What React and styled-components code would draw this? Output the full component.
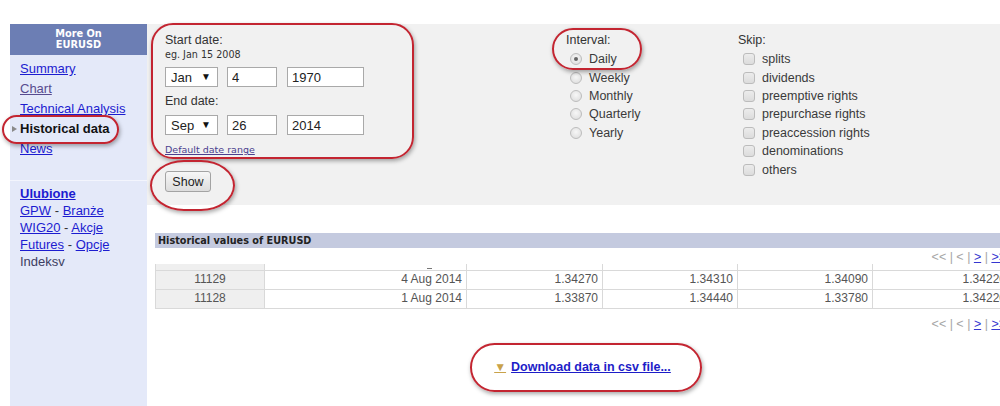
import React from 'react';
import styled, { createGlobalStyle } from 'styled-components';

const Global = createGlobalStyle`
  html, body { margin: 0; padding: 0; background: #fff; }
  body {
    font-family: "Liberation Sans", Arial, sans-serif;
    font-size: 12.5px;
    color: #333;
  }
  * { box-sizing: border-box; }
`;

const Page = styled.div`
  position: relative;
  width: 1000px;
  height: 406px;
  overflow: hidden;
  display: flex;
  align-items: stretch;
  padding: 24px 0 0 10px;
`;

/* ---------- sidebar ---------- */
const Sidebar = styled.aside`
  width: 137px;
  flex-shrink: 0;
  background: #e4e9f9;
  display: flex;
  flex-direction: column;
`;

const SideHeader = styled.div`
  height: 31px;
  padding-top: 4px;
  background: #6c7eb4;
  color: #fff;
  font-family: "DejaVu Sans", Verdana, sans-serif;
  font-weight: bold;
  font-size: 9.8px;
  line-height: 11px;
  text-align: center;
`;

const SideNav = styled.nav`
  display: flex;
  flex-direction: column;
  padding: 4px 0 0 10px;
`;

const NavLink = styled.a`
  display: block;
  line-height: 20px;
  font-size: 13px;
  color: ${(p) => (p.$visited ? '#574b8f' : '#1c1cd0')};
  text-decoration: underline;
  cursor: pointer;
`;

const CurrentItem = styled.div`
  display: flex;
  align-items: center;
  margin-left: -8px;
  line-height: 20px;
  font-size: 13px;
  font-weight: bold;
  color: #111;
`;

const Pointer = styled.span`
  width: 0;
  height: 0;
  border-left: 5px solid #8a8a8a;
  border-top: 3.5px solid transparent;
  border-bottom: 3.5px solid transparent;
  margin-right: 3px;
`;

const Separator = styled.div`
  height: 1px;
  margin-top: 21px;
  background: #f3f5fd;
`;

const Favorites = styled.div`
  padding: 4px 0 0 10px;
  display: flex;
  flex-direction: column;
`;

const FavLine = styled.div`
  line-height: 17px;
  font-size: 13px;
  color: ${(p) => (p.$plain ? '#3d3d62' : '#333')};
`;

const FavLink = styled.a`
  color: #1c1cd0;
  text-decoration: underline;
  font-weight: ${(p) => (p.$bold ? 'bold' : 'normal')};
`;

/* ---------- main ---------- */
const Main = styled.main`
  flex: 1;
  display: flex;
  flex-direction: column;
  min-width: 0;
`;

const FormPanel = styled.section`
  height: 181px;
  background: #f1f1f1;
  display: flex;
  padding: 9px 0 0 18px;
`;

const DateCol = styled.div`
  width: 401px;
  display: flex;
  flex-direction: column;
  align-items: flex-start;
`;

const Label = styled.div`
  line-height: 15px;
  font-size: 12.5px;
  color: #333;
  margin-top: ${(p) => p.$mt || 0}px;
`;

const Hint = styled.div`
  margin-top: 1px;
  font-family: "DejaVu Sans", Verdana, sans-serif;
  font-size: 9.6px;
  line-height: 12px;
  color: #333;
`;

const FieldRow = styled.div`
  display: flex;
  height: 20px;
  margin-top: 6px;
`;

const SelectWrap = styled.div`
  position: relative;
  width: 53px;
  height: 20px;
`;

const Select = styled.select`
  appearance: none;
  width: 53px;
  height: 20px;
  border: 1px solid #a9a9a9;
  background: #fff;
  font-family: "Liberation Sans", Arial, sans-serif;
  font-size: 13px;
  color: #222;
  padding: 0 0 0 5px;
  border-radius: 0;
`;

const Arrow = styled.span`
  position: absolute;
  right: 7px;
  top: 4px;
  font-size: 10px;
  line-height: 11px;
  color: #111;
  pointer-events: none;
`;

const TextInput = styled.input`
  width: ${(p) => p.$w}px;
  height: 20px;
  margin-left: ${(p) => p.$ml}px;
  border: 1px solid #a9a9a9;
  background: #fff;
  font-family: "Liberation Sans", Arial, sans-serif;
  font-size: 13px;
  color: #222;
  padding: 0 4px;
`;

const SmallLink = styled.a`
  margin-top: 9px;
  font-family: "DejaVu Sans", Verdana, sans-serif;
  font-size: 9.5px;
  line-height: 12px;
  color: #4b3e8e;
  text-decoration: underline;
`;

const ShowButton = styled.button`
  margin-top: 15px;
  width: 46px;
  height: 21px;
  padding: 0;
  border: 1px solid #a3a3a3;
  border-radius: 3px;
  background: linear-gradient(#f7f7f7, #dddddd);
  font-family: "Liberation Sans", Arial, sans-serif;
  font-size: 12.5px;
  color: #222;
`;

const OptionCol = styled.div`
  width: ${(p) => (p.$w ? `${p.$w}px` : 'auto')};
  display: flex;
  flex-direction: column;
`;

const OptionList = styled.div`
  margin-top: 2px;
  display: flex;
  flex-direction: column;
`;

const OptionItem = styled.label`
  display: flex;
  align-items: center;
  height: 18.4px;
  padding-left: ${(p) => p.$pl}px;
  gap: 7px;
  font-size: 12.5px;
  color: #3a3a3a;
`;

const Radio = styled.span`
  width: 12px;
  height: 12px;
  border-radius: 50%;
  border: 1px solid #bdbdbd;
  background: radial-gradient(circle at 50% 40%, #f7f7f7, #dadada);
  display: flex;
  align-items: center;
  justify-content: center;
  &::after {
    content: '';
    width: 4px;
    height: 4px;
    border-radius: 50%;
    background: ${(p) => (p.$checked ? '#666' : 'transparent')};
  }
`;

const Checkbox = styled.span`
  width: 12px;
  height: 12px;
  border-radius: 3px;
  border: 1px solid #bcbcbc;
  background: linear-gradient(#ececec, #dcdcdc);
`;

/* ---------- table ---------- */
const TableSection = styled.section`
  margin: 28px 0 0 8px;
  width: 855px;
  display: flex;
  flex-direction: column;
`;

const TableTitle = styled.div`
  height: 15px;
  background: #c4cadf;
  padding-left: 3px;
  font-family: "DejaVu Sans", Verdana, sans-serif;
  font-weight: bold;
  font-size: 9.7px;
  line-height: 15px;
  color: #222;
`;

const Pager = styled.div`
  margin-top: ${(p) => p.$mt}px;
  padding-right: 4px;
  text-align: right;
  line-height: 14px;
  font-size: 12.5px;
  color: #a6a6a6;
  white-space: pre;
`;

const PagerLink = styled.a`
  color: #3636d0;
  text-decoration: underline;
`;

const Table = styled.table`
  width: 855px;
  border-collapse: collapse;
  table-layout: fixed;
`;

const ClipCell = styled.td`
  height: 6px;
  padding: 0 34px 0 0;
  border-left: 1px solid #d9d9d9;
  border-right: 1px solid #d9d9d9;
  background: ${(p) => (p.$first ? '#efefef' : '#fff')};
  line-height: 0;
  text-align: right;
  vertical-align: middle;
`;

const Dash = styled.span`
  display: inline-block;
  width: 5px;
  height: 1px;
  background: #777;
`;

const Cell = styled.td`
  height: 19px;
  padding: 0 4px;
  border: 1px solid #d9d9d9;
  font-size: 12px;
  line-height: 17px;
  color: #555;
  text-align: ${(p) => (p.$first ? 'center' : 'right')};
  background: ${(p) => (p.$first ? '#efefef' : '#fff')};
  white-space: nowrap;
`;

const DownloadRow = styled.div`
  margin-top: 29px;
  text-align: center;
  line-height: 14px;
`;

const DownloadLink = styled.a`
  font-family: "Liberation Sans", Arial, sans-serif;
  font-weight: bold;
  font-size: 12.5px;
  cursor: pointer;
`;

const Tri = styled.span`
  color: #c9a24a;
  font-size: 12px;
  text-decoration: underline;
  margin-right: 5px;
`;

const DownloadText = styled.span`
  color: #1d1dc8;
  text-decoration: underline;
`;

/* ---------- annotations ---------- */
const Mark = styled.div`
  position: absolute;
  left: ${(p) => p.$x}px;
  top: ${(p) => p.$y}px;
  width: ${(p) => p.$w}px;
  height: ${(p) => p.$h}px;
  border: 2px solid #c32531;
  border-radius: ${(p) => p.$r};
  box-shadow: 1px 2px 4px rgba(0, 0, 0, 0.35);
  pointer-events: none;
`;

const intervals = ['Daily', 'Weekly', 'Monthly', 'Quarterly', 'Yearly'];
const skips = [
  'splits',
  'dividends',
  'preemptive rights',
  'prepurchase rights',
  'preaccession rights',
  'denominations',
  'others',
];
const rows = [
  ['11129', '4 Aug 2014', '1.34270', '1.34310', '1.34090', '1.34220'],
  ['11128', '1 Aug 2014', '1.33870', '1.34440', '1.33780', '1.34220'],
];
const colWidths = [109, 202, 136, 135, 135, 138];

function PagerLine({ mt }) {
  return (
    <Pager $mt={mt}>
      {'<< | < | '}
      <PagerLink>&gt;</PagerLink>
      {' | '}
      <PagerLink>&gt;&gt;</PagerLink>
    </Pager>
  );
}

export default function App() {
  return (
    <>
      <Global />
      <Page>
        <Sidebar>
          <SideHeader>
            More On
            <br />
            EURUSD
          </SideHeader>
          <SideNav>
            <NavLink>Summary</NavLink>
            <NavLink $visited>Chart</NavLink>
            <NavLink>Technical Analysis</NavLink>
            <CurrentItem>
              <Pointer />
              Historical data
            </CurrentItem>
            <NavLink>News</NavLink>
          </SideNav>
          <Separator />
          <Favorites>
            <FavLine>
              <FavLink $bold>Ulubione</FavLink>
            </FavLine>
            <FavLine>
              <FavLink>GPW</FavLink> - <FavLink>Branże</FavLink>
            </FavLine>
            <FavLine>
              <FavLink>WIG20</FavLink> - <FavLink>Akcje</FavLink>
            </FavLine>
            <FavLine>
              <FavLink>Futures</FavLink> - <FavLink>Opcje</FavLink>
            </FavLine>
            <FavLine $plain>Indeksv</FavLine>
          </Favorites>
        </Sidebar>

        <Main>
          <FormPanel>
            <DateCol>
              <Label>Start date:</Label>
              <Hint>eg. Jan 15 2008</Hint>
              <FieldRow>
                <SelectWrap>
                  <Select defaultValue="Jan">
                    <option>Jan</option>
                  </Select>
                  <Arrow>▼</Arrow>
                </SelectWrap>
                <TextInput $w={50} $ml={9} defaultValue="4" />
                <TextInput $w={77} $ml={10} defaultValue="1970" />
              </FieldRow>
              <Label $mt={7}>End date:</Label>
              <FieldRow>
                <SelectWrap>
                  <Select defaultValue="Sep">
                    <option>Sep</option>
                  </Select>
                  <Arrow>▼</Arrow>
                </SelectWrap>
                <TextInput $w={50} $ml={9} defaultValue="26" />
                <TextInput $w={77} $ml={10} defaultValue="2014" />
              </FieldRow>
              <SmallLink>Default date range</SmallLink>
              <ShowButton>Show</ShowButton>
            </DateCol>

            <OptionCol $w={172}>
              <Label>Interval:</Label>
              <OptionList>
                {intervals.map((t, i) => (
                  <OptionItem key={t} $pl={4}>
                    <Radio $checked={i === 0} />
                    {t}
                  </OptionItem>
                ))}
              </OptionList>
            </OptionCol>

            <OptionCol>
              <Label>Skip:</Label>
              <OptionList>
                {skips.map((t) => (
                  <OptionItem key={t} $pl={5}>
                    <Checkbox />
                    {t}
                  </OptionItem>
                ))}
              </OptionList>
            </OptionCol>
          </FormPanel>

          <TableSection>
            <TableTitle>Historical values of EURUSD</TableTitle>
            <PagerLine mt={2} />
            <Table>
              <colgroup>
                {colWidths.map((w, i) => (
                  <col key={i} style={{ width: w }} />
                ))}
              </colgroup>
              <tbody>
                <tr>
                  {colWidths.map((w, i) => (
                    <ClipCell key={i} $first={i === 0}>
                      {i === 1 ? <Dash /> : null}
                    </ClipCell>
                  ))}
                </tr>
                {rows.map((r) => (
                  <tr key={r[0]}>
                    {r.map((c, i) => (
                      <Cell key={i} $first={i === 0}>
                        {c}
                      </Cell>
                    ))}
                  </tr>
                ))}
              </tbody>
            </Table>
            <PagerLine mt={8} />
            <DownloadRow>
              <DownloadLink>
                <Tri>▼</Tri>
                <DownloadText>Download data in csv file...</DownloadText>
              </DownloadLink>
            </DownloadRow>
          </TableSection>
        </Main>

        <Mark $x={2} $y={115} $w={117} $h={29} $r="15px" />
        <Mark $x={151} $y={23} $w={263} $h={136} $r="22px" />
        <Mark $x={150} $y={160} $w={85} $h={51} $r="40px / 30px" />
        <Mark $x={552} $y={28} $w={90} $h={42} $r="24px" />
        <Mark $x={470} $y={343} $w={232} $h={49} $r="26px" />
      </Page>
    </>
  );
}
